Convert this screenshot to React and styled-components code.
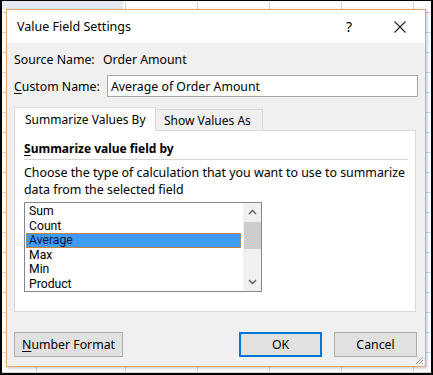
import React from 'react';
import styled, { createGlobalStyle } from 'styled-components';

const GlobalStyle = createGlobalStyle`
  html, body { margin: 0; padding: 0; background: #fff; }
  body {
    font-family: "Noto Sans", "Segoe UI", sans-serif;
    font-size: 12.3px;
    color: #000;
  }
`;

const gridCols = `linear-gradient(to right,
  transparent 34px, #d6d6d6 34px 35px,
  transparent 35px 123px, #d6d6d6 123px 124px,
  transparent 124px 195px, #d6d6d6 195px 196px,
  transparent 196px 267px, #d6d6d6 267px 268px,
  transparent 268px 339px, #d6d6d6 339px 340px,
  transparent 340px 411px, #d6d6d6 411px 412px,
  transparent 412px)`;

const Sheet = styled.div`
  width: 433px;
  height: 375px;
  box-sizing: border-box;
  border: 2px solid #000;
  border-top-width: 1px;
  padding: 8px 0 0 4px;
  overflow: hidden;
  background-color: #fff;
  background-image:
    linear-gradient(#e4eaf1, #e4eaf1),
    ${gridCols},
    linear-gradient(to bottom, transparent 19px, #d6d6d6 19px 20px);
  background-size: 121px 8px, 100% 100%, 100% 20px;
  background-repeat: no-repeat, no-repeat, repeat;
  background-position: 0 0, 0 0, 0 -8px;
`;

const Dialog = styled.div`
  width: 420px;
  height: 358px;
  box-sizing: border-box;
  border: 1px solid #e9a867;
  background: #f0f0f0;
  display: flex;
  flex-direction: column;
  box-shadow: 1px 1px 3px rgba(0, 0, 0, 0.25);
`;

const TitleBar = styled.div`
  height: 33px;
  background: #fff;
  display: flex;
  align-items: center;
  padding-left: 10px;
  flex-shrink: 0;
`;

const Title = styled.div`
  flex: 1;
  font-size: 12.5px;
`;

const HelpButton = styled.div`
  width: 16px;
  text-align: center;
  font-size: 14px;
  margin-right: 31px;
`;

const CloseButton = styled.div`
  width: 24px;
  height: 24px;
  margin-right: 13px;
  display: flex;
  align-items: center;
  justify-content: center;
`;

const Body = styled.div`
  flex: 1;
  display: flex;
  flex-direction: column;
  padding: 0 7px 9px;
  position: relative;
`;

const FieldRow = styled.div`
  display: flex;
  align-items: center;
  height: ${p => p.$h}px;
  margin-top: 8px;
`;

const Label = styled.div`
  width: ${p => p.$w}px;
  flex-shrink: 0;
  white-space: nowrap;
`;

const Key = styled.span`
  text-decoration: underline;
  text-underline-offset: 2px;
`;

const TextInput = styled.div`
  width: 311px;
  height: 22px;
  box-sizing: border-box;
  border: 1px solid #a8a8a8;
  background: #fff;
  padding-left: 3px;
  display: flex;
  align-items: center;
`;

const TabStrip = styled.div`
  display: flex;
  align-items: flex-end;
  margin-top: 10px;
  height: 23px;
`;

const Tab = styled.div`
  box-sizing: border-box;
  height: ${p => (p.$active ? 24 : 21)}px;
  margin-bottom: ${p => (p.$active ? -1 : 0)}px;
  width: ${p => p.$w}px;
  border: 1px solid #d9d9d9;
  border-bottom: none;
  background: ${p => (p.$active ? '#fff' : '#f0f0f0')};
  padding-left: ${p => (p.$active ? 10 : 8)}px;
  font-size: 12px;
  display: flex;
  align-items: center;
  position: relative;
  z-index: ${p => (p.$active ? 1 : 0)};
  ${p => !p.$active && 'border-left: none;'}
`;

const Panel = styled.div`
  height: 182px;
  box-sizing: border-box;
  width: 402px;
  border: 1px solid #d9d9d9;
  background: #fff;
  padding: 10px 8px 0 9px;
`;

const Heading = styled.div`
  font-weight: bold;
  line-height: 16px;
  font-size: 12px;
`;

const Rule = styled.div`
  height: 1px;
  background: #d5d5d5;
  margin: 2px 0 4px;
  width: 384px;
`;

const Hint = styled.div`
  line-height: 17px;
  white-space: nowrap;
  font-size: 12.4px;
`;

const ListBox = styled.div`
  margin-top: 4px;
  width: 238px;
  height: 90px;
  box-sizing: border-box;
  border: 1px solid #828790;
  display: flex;
`;

const Items = styled.div`
  flex: 1;
  padding: 1px 2px 0 1px;
  overflow: hidden;
  font-family: Roboto, "Noto Sans", sans-serif;
  font-size: 12.2px;
`;

const Item = styled.div`
  height: 14.5px;
  line-height: 14.5px;
  padding-left: 3px;
  box-sizing: border-box;
  ${p =>
    p.$selected &&
    `
    background: #3d9cf5;
    outline: 1px dotted #c58a3c;
    outline-offset: -1px;
    color: #0a1a3a;
  `}
`;

const ScrollBar = styled.div`
  width: 18px;
  background: #f0f0f0;
  display: flex;
  flex-direction: column;
  align-items: center;
`;

const ArrowBox = styled.div`
  height: 18px;
  width: 100%;
  display: flex;
  align-items: center;
  justify-content: center;
`;

const Thumb = styled.div`
  width: 17px;
  height: 27px;
  margin-top: 1px;
  background: #cdcdcd;
`;

const Spacer = styled.div`
  flex: 1;
`;

const ButtonRow = styled.div`
  display: flex;
  align-items: center;
  margin-top: 20px;
`;

const Button = styled.div`
  width: ${p => p.$w}px;
  height: 25px;
  box-sizing: border-box;
  background: #e1e1e1;
  border: ${p => (p.$primary ? '2px solid #0078d7' : '1px solid #adadad')};
  display: flex;
  align-items: center;
  justify-content: center;
  margin-left: ${p => p.$ml || 0}px;
`;

const Grip = styled.svg`
  position: absolute;
  right: 1px;
  bottom: 1px;
`;

const Chevron = ({ up }) => (
  <svg width="9" height="6" viewBox="0 0 9 6">
    <path
      d={up ? 'M1 5 L4.5 1.5 L8 5' : 'M1 1 L4.5 4.5 L8 1'}
      fill="none"
      stroke="#606060"
      strokeWidth="1.4"
    />
  </svg>
);

const items = ['Sum', 'Count', 'Average', 'Max', 'Min', 'Product'];

export default function App() {
  return (
    <>
      <GlobalStyle />
      <Sheet>
        <Dialog>
          <TitleBar>
            <Title>Value Field Settings</Title>
            <HelpButton>?</HelpButton>
            <CloseButton>
              <svg width="12" height="12" viewBox="0 0 12 12">
                <path d="M0.5 0.5 L11.5 11.5 M11.5 0.5 L0.5 11.5" stroke="#222" strokeWidth="1.1" />
              </svg>
            </CloseButton>
          </TitleBar>
          <Body>
            <FieldRow $h={16}>
              <Label $w={89}>Source Name:</Label>
              <span>Order Amount</span>
            </FieldRow>
            <FieldRow $h={22}>
              <Label $w={93}>
                <Key>C</Key>ustom Name:
              </Label>
              <TextInput>Average of Order Amount</TextInput>
            </FieldRow>
            <TabStrip>
              <Tab $active $w={142}>Summarize Values By</Tab>
              <Tab $w={107}>Show Values As</Tab>
            </TabStrip>
            <Panel>
              <Heading>
                <Key>S</Key>ummarize value field by
              </Heading>
              <Rule />
              <Hint>Choose the type of calculation that you want to use to summarize</Hint>
              <Hint>data from the selected field</Hint>
              <ListBox>
                <Items>
                  {items.map(name => (
                    <Item key={name} $selected={name === 'Average'}>
                      {name}
                    </Item>
                  ))}
                </Items>
                <ScrollBar>
                  <ArrowBox>
                    <Chevron up />
                  </ArrowBox>
                  <Thumb />
                  <Spacer />
                  <ArrowBox>
                    <Chevron />
                  </ArrowBox>
                </ScrollBar>
              </ListBox>
            </Panel>
            <ButtonRow>
              <Button $w={109}>
                <span>
                  <Key>N</Key>umber Format
                </span>
              </Button>
              <Button $w={83} $ml={116} $primary>OK</Button>
              <Button $w={83} $ml={12}>Cancel</Button>
            </ButtonRow>
            <Grip width="9" height="9" viewBox="0 0 9 9">
              <path d="M8 1 L1 8 M8 4 L4 8 M8 7 L7 8" stroke="#a0a0a0" strokeWidth="1" />
            </Grip>
          </Body>
        </Dialog>
      </Sheet>
    </>
  );
}
